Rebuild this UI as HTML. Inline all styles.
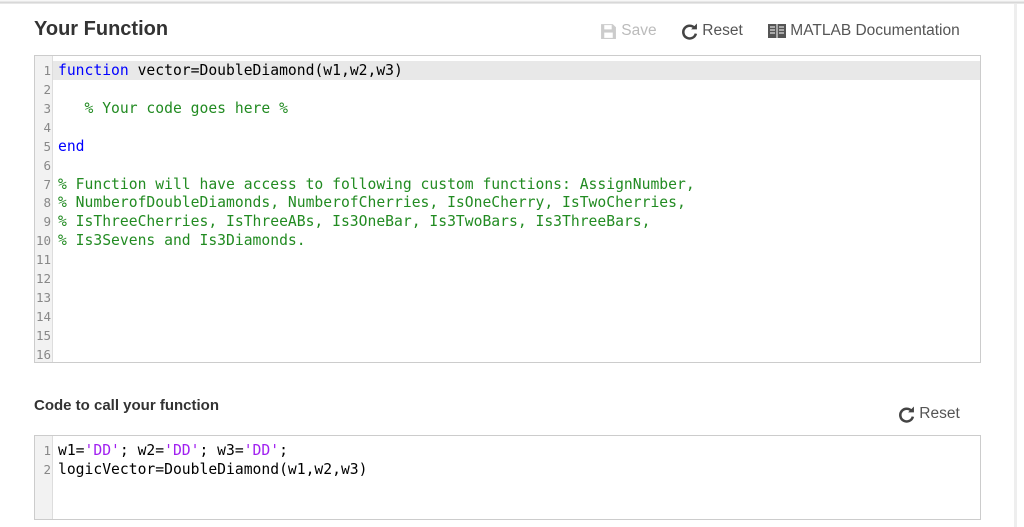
<!DOCTYPE html>
<html><head><style>
body{margin:0;width:1024px;height:527px;background:#fff;overflow:hidden;position:relative;font-family:"Liberation Sans",sans-serif;}
.topsh{position:absolute;left:0;top:0;width:1024px;height:4px;background:linear-gradient(#fff,#d0d0d0 75%,#fff);}
.rsh{position:absolute;left:1014px;top:4px;width:3px;height:523px;background:#eee;}
h2{position:absolute;left:34px;top:18px;margin:0;font-size:20px;font-weight:bold;color:#333;}
.tb{position:absolute;top:22px;font-size:15.5px;color:#555;display:flex;align-items:center;}
.ed{position:absolute;left:34px;width:947px;border:1px solid #ccc;background:#fff;overflow:hidden;}
.gut{position:absolute;left:0;top:0;bottom:0;width:17px;background:#f2f2f2;border-right:1px solid #ddd;}
.ln{position:relative;height:18.93px;line-height:19px;font-family:"DejaVu Sans Mono",monospace;font-size:14.7px;white-space:pre;color:#000;}
.ln .n{display:inline-block;width:16px;text-align:right;color:#888;font-size:12.5px;margin-right:7px;}
.hl{background:#e8e8e8;margin-left:18px;}
.hl .n{margin-left:-18px;}
.k{color:#0000ff}.c{color:#228b22}.s{color:#a020f0}
h3{position:absolute;left:34px;top:397px;margin:0;font-size:15px;font-weight:bold;color:#333;}
</style></head><body>
<div class="topsh"></div><div class="rsh"></div>
<h2>Your Function</h2>
<div class="tb" style="left:600px;color:#bbb"><svg width="17" height="17" viewBox="0 0 16 16"><path d="M1 1h11l3 3v11H1z" fill="#ccc"/><rect x="4" y="2" width="7" height="4" fill="#fff"/><rect x="4" y="9" width="8" height="5" fill="#fff"/></svg>&nbsp;Save</div>
<div class="tb" style="left:681px"><svg width="17" height="17" viewBox="0 0 16 16"><path d="M13 5A6 6 0 1 0 14 10" fill="none" stroke="#444" stroke-width="2.4"/><path d="M9.5 6H15V0.5z" fill="#444"/></svg>&nbsp;Reset</div>
<div class="tb" style="left:768px"><svg width="18" height="16" viewBox="0 0 18 16"><rect x="0" y="1" width="18" height="14" fill="#555"/><path d="M2 4h5M2 7h5M2 10h5M11 4h5M11 7h5M11 10h5" stroke="#ddd" stroke-width="1.2"/><path d="M9 1v14" stroke="#fff"/></svg>&nbsp;MATLAB Documentation</div>
<div class="ed" style="top:55px;height:308px;padding-top:5px;box-sizing:border-box">
<div class="gut"></div>
<div class="ln hl"><span class="n">1</span><span class="k">function</span> vector=DoubleDiamond(w1,w2,w3)</div>
<div class="ln"><span class="n">2</span></div>
<div class="ln"><span class="n">3</span>   <span class="c">% Your code goes here %</span></div>
<div class="ln"><span class="n">4</span></div>
<div class="ln"><span class="n">5</span><span class="k">end</span></div>
<div class="ln"><span class="n">6</span></div>
<div class="ln"><span class="n">7</span><span class="c">% Function will have access to following custom functions: AssignNumber,</span></div>
<div class="ln"><span class="n">8</span><span class="c">% NumberofDoubleDiamonds, NumberofCherries, IsOneCherry, IsTwoCherries,</span></div>
<div class="ln"><span class="n">9</span><span class="c">% IsThreeCherries, IsThreeABs, Is3OneBar, Is3TwoBars, Is3ThreeBars,</span></div>
<div class="ln"><span class="n">10</span><span class="c">% Is3Sevens and Is3Diamonds.</span></div>
<div class="ln"><span class="n">11</span></div>
<div class="ln"><span class="n">12</span></div>
<div class="ln"><span class="n">13</span></div>
<div class="ln"><span class="n">14</span></div>
<div class="ln"><span class="n">15</span></div>
<div class="ln"><span class="n">16</span></div>
</div>
<h3>Code to call your function</h3>
<div class="tb" style="left:898px;top:405px"><svg width="17" height="17" viewBox="0 0 16 16"><path d="M13 5A6 6 0 1 0 14 10" fill="none" stroke="#444" stroke-width="2.4"/><path d="M9.5 6H15V0.5z" fill="#444"/></svg>&nbsp;Reset</div>
<div class="ed" style="top:435px;height:85px;padding-top:5px;box-sizing:border-box">
<div class="gut"></div>
<div class="ln"><span class="n">1</span>w1=<span class="s">'DD'</span>; w2=<span class="s">'DD'</span>; w3=<span class="s">'DD'</span>;</div>
<div class="ln"><span class="n">2</span>logicVector=DoubleDiamond(w1,w2,w3)</div>
</div>
</body></html>
